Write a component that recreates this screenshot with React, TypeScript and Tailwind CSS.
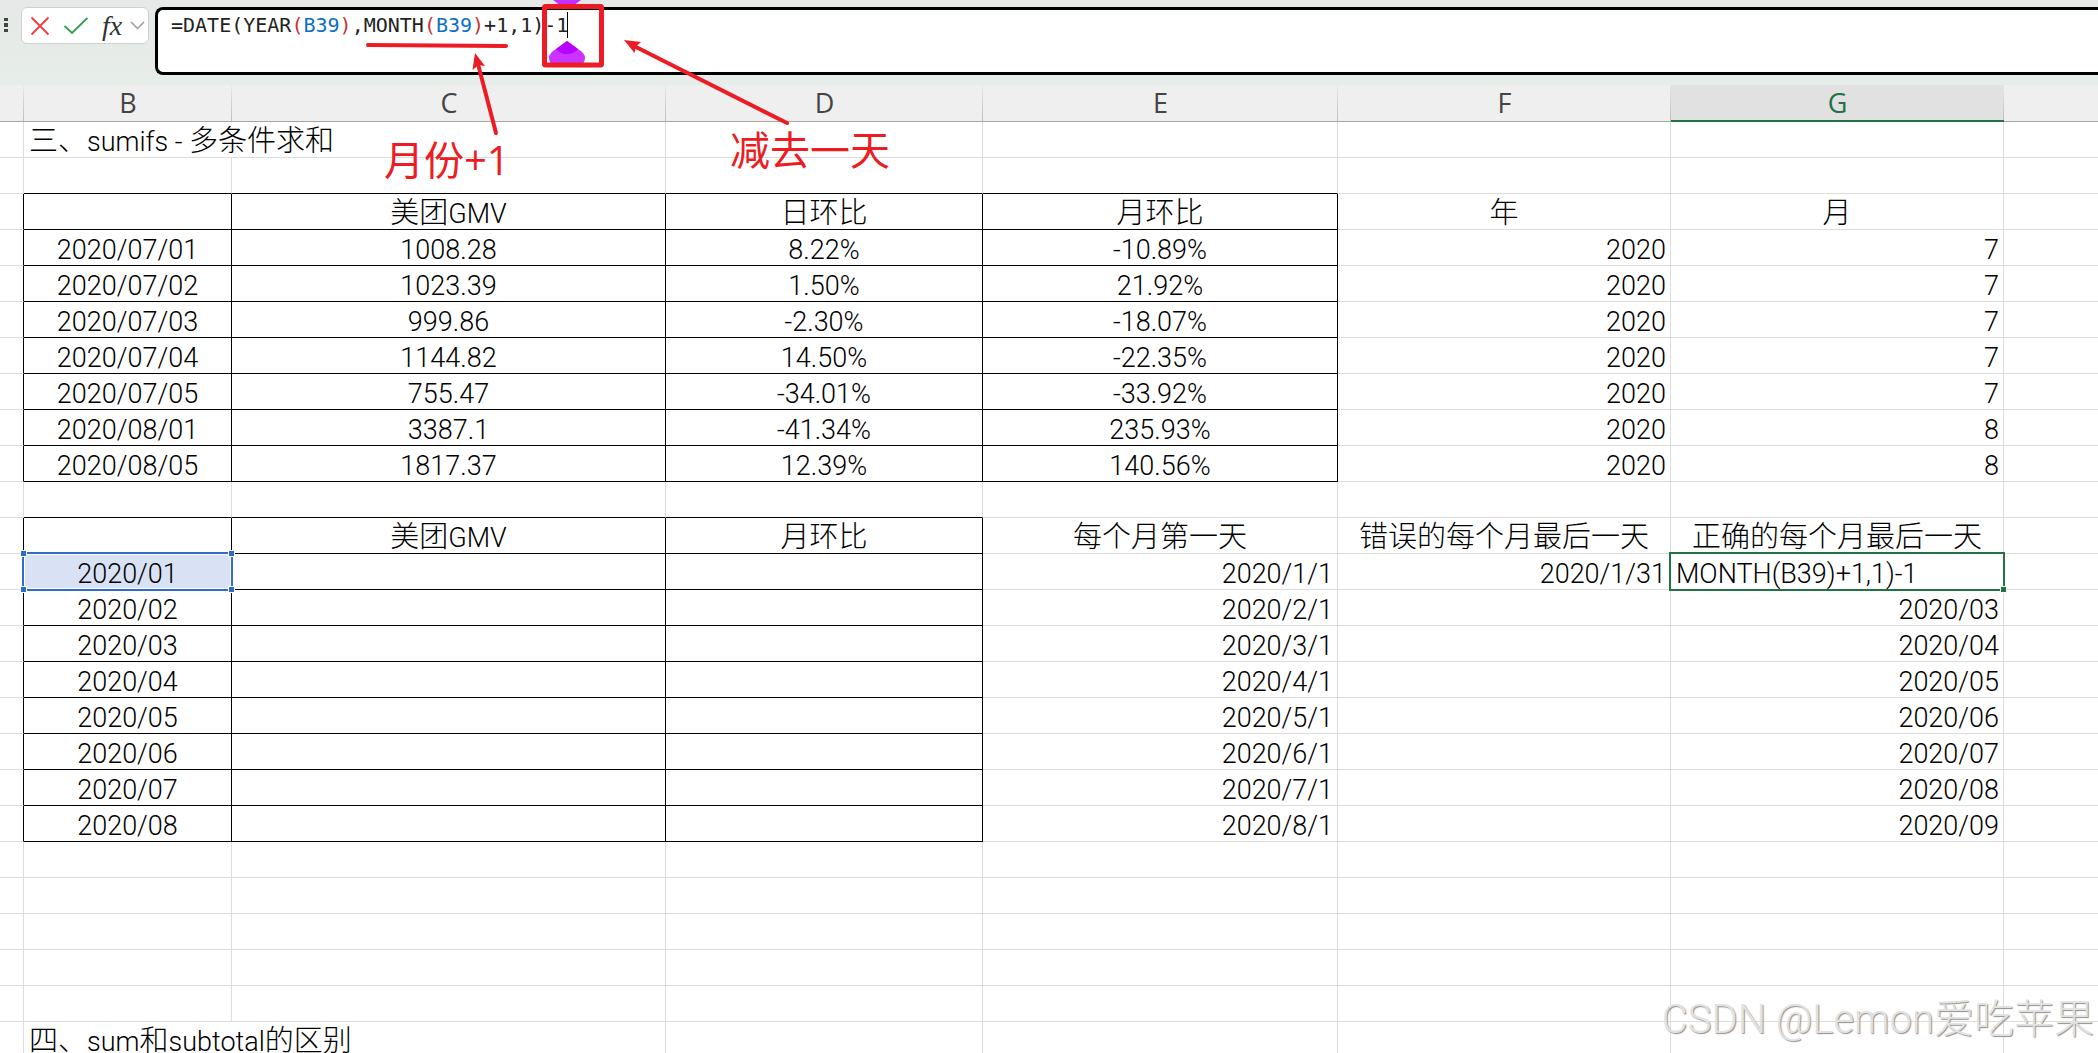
import { Fragment } from 'react';

type Align = 'left' | 'center' | 'right';

interface CellData {
  text?: string;
  align?: Align;
  boxed?: boolean;
  span?: number;
  mark?: 'reference' | 'active';
}

const columns = ['A', 'B', 'C', 'D', 'E', 'F', 'G', 'H'];

//Daily figures, one array per row: date, GMV, day ratio, month ratio, year, month
const daily = [
  ['2020/07/01', '1008.28', '8.22%', '-10.89%', '2020', '7'],
  ['2020/07/02', '1023.39', '1.50%', '21.92%', '2020', '7'],
  ['2020/07/03', '999.86', '-2.30%', '-18.07%', '2020', '7'],
  ['2020/07/04', '1144.82', '14.50%', '-22.35%', '2020', '7'],
  ['2020/07/05', '755.47', '-34.01%', '-33.92%', '2020', '7'],
  ['2020/08/01', '3387.1', '-41.34%', '235.93%', '2020', '8'],
  ['2020/08/05', '1817.37', '12.39%', '140.56%', '2020', '8'],
];

//Monthly figures: month, first day, wrong last day, correct last day
const monthly = [
  ['2020/01', '2020/1/1', '2020/1/31', 'MONTH(B39)+1,1)-1'],
  ['2020/02', '2020/2/1', '', '2020/03'],
  ['2020/03', '2020/3/1', '', '2020/04'],
  ['2020/04', '2020/4/1', '', '2020/05'],
  ['2020/05', '2020/5/1', '', '2020/06'],
  ['2020/06', '2020/6/1', '', '2020/07'],
  ['2020/07', '2020/7/1', '', '2020/08'],
  ['2020/08', '2020/8/1', '', '2020/09'],
];

const box = (text = ''): CellData => ({ text, align: 'center', boxed: true });
const mid = (text: string): CellData => ({ text, align: 'center' });
const num = (text: string): CellData => ({ text, align: 'right' });
const blankRow = (): CellData[] => columns.map(() => ({}));
const titleRow = (text: string): CellData[] => [{}, { text, align: 'left', span: 2 }, {}, {}, {}, {}, {}];

const rows: CellData[][] = [
  titleRow('三、sumifs - 多条件求和'),
  blankRow(),
  [{}, box(), box('美团GMV'), box('日环比'), box('月环比'), mid('年'), mid('月'), {}],
  ...daily.map((d) => [{}, box(d[0]), box(d[1]), box(d[2]), box(d[3]), num(d[4]), num(d[5]), {}]),
  blankRow(),
  [{}, box(), box('美团GMV'), box('月环比'), mid('每个月第一天'), mid('错误的每个月最后一天'), mid('正确的每个月最后一天'), {}],
  ...monthly.map((m, i): CellData[] => [
    {},
    { ...box(m[0]), mark: i === 0 ? 'reference' : undefined },
    box(),
    box(),
    num(m[1]),
    num(m[2]),
    i === 0 ? { text: m[3], align: 'left', mark: 'active' } : num(m[3]),
    {},
  ]),
  blankRow(),
  blankRow(),
  blankRow(),
  blankRow(),
  blankRow(),
  titleRow('四、sum和subtotal的区别'),
];

const alignClass = {
  left: 'text-left pl-[5px]',
  center: 'text-center',
  right: 'text-right pr-1',
};

//Latin runs are set a little smaller than the Chinese ones
function CellText({ text }: { text: string }) {
  const parts = text.split(/([\x20-\x7e]+)/).filter(Boolean);
  return (
    <span className="relative z-20 whitespace-pre">
      {parts.map((part, i) =>
        /^[\x20-\x7e]/.test(part) ? (
          <span key={i} className="text-[27px]">{part}</span>
        ) : (
          <Fragment key={i}>{part}</Fragment>
        )
      )}
    </span>
  );
}

function Cell({ cell, next, below }: { cell: CellData; next?: CellData; below?: CellData }) {
  const right = cell.boxed || next?.boxed ? 'border-r-black' : 'border-r-[#dcdcdc]';
  const bottom = cell.boxed || below?.boxed ? 'border-b-black' : 'border-b-[#dcdcdc]';

  return (
    <td
      colSpan={cell.span}
      className={`relative h-9 border-r border-b px-0 pt-[3px] pb-0 leading-[30px] last:border-r-0 ${right} ${bottom} ${alignClass[cell.align ?? 'left']}`}
    >
      {cell.mark === 'reference' && (
        <div className="absolute -inset-[2px] z-10 border-2 border-[#2f6bc9] bg-[#d9e1f4] shadow-[inset_0_0_0_1px_white]">
          <span className="absolute -top-[3px] -left-[3px] size-[5px] bg-[#2f6bc9] ring-1 ring-white" />
          <span className="absolute -top-[3px] -right-[3px] size-[5px] bg-[#2f6bc9] ring-1 ring-white" />
          <span className="absolute -bottom-[3px] -left-[3px] size-[5px] bg-[#2f6bc9] ring-1 ring-white" />
          <span className="absolute -right-[3px] -bottom-[3px] size-[5px] bg-[#2f6bc9] ring-1 ring-white" />
        </div>
      )}
      {cell.mark === 'active' && (
        <div className="absolute -inset-[2px] z-10 border-2 border-[#217346]">
          <span className="absolute -right-[3px] -bottom-[3px] size-[5px] bg-[#217346] ring-1 ring-white" />
        </div>
      )}
      {cell.text && <CellText text={cell.text} />}
    </td>
  );
}

function FormulaBar() {
  return (
    <div className="flex h-[85px] items-start bg-linear-to-b from-[#e6e9e7] to-[#e7ede8] pt-[7px]">
      <svg className="mt-[10px] h-4 w-[21px]" viewBox="0 0 21 16" fill="#444">
        <rect x="4" y="1" width="4" height="3" />
        <rect x="4" y="6" width="4" height="4" />
        <rect x="4" y="12" width="4" height="3" />
      </svg>

      <div className="flex h-[37px] w-32 items-center rounded-md border border-[#d0d0d0] bg-white">
        <button aria-label="Cancel" className="flex w-9 justify-center">
          <svg width="20" height="20" viewBox="0 0 20 20" stroke="#f03a3e" strokeWidth="1.8" fill="none">
            <path d="M1.5 1.5 L18.5 18.5 M18.5 1.5 L1.5 18.5" />
          </svg>
        </button>
        <button aria-label="Enter" className="flex w-9 justify-center">
          <svg width="24" height="18" viewBox="0 0 24 18" stroke="#2f9e4f" strokeWidth="1.8" fill="none">
            <path d="M0.5 9 L8 16 L23.5 1" />
          </svg>
        </button>
        <button
          aria-label="Insert function"
          className="flex-1 text-center font-['Liberation_Serif',serif] text-[28px] leading-8 text-[#333] italic"
        >
          fx
        </button>
        <button aria-label="Recent functions" className="flex w-[18px] justify-start">
          <svg width="15" height="9" viewBox="0 0 15 9" stroke="#999" strokeWidth="1.5" fill="none">
            <path d="M1 1 L7.5 7.5 L14 1" />
          </svg>
        </button>
      </div>

      <div
        role="textbox"
        aria-label="Formula"
        contentEditable
        suppressContentEditableWarning
        className="ml-1.5 h-[68px] flex-1 rounded-l-lg border-[3px] border-r-0 border-black bg-white pt-[3px] pl-[13px] font-['DejaVu_Sans_Mono',monospace] text-[20px] leading-6 whitespace-pre text-[#222] outline-none"
      >
        =DATE(YEAR<span className="text-[#c8322f]">(</span>
        <span className="text-[#0a6fc8]">B39</span>
        <span className="text-[#c8322f]">)</span>,MONTH<span className="text-[#c8322f]">(</span>
        <span className="text-[#0a6fc8]">B39</span>
        <span className="text-[#c8322f]">)</span>+1,1)-1
      </div>
    </div>
  );
}

function Sheet() {
  return (
    <table className="w-full table-fixed border-separate border-spacing-0 bg-white font-['Roboto','Noto_Sans_CJK_SC',sans-serif] text-[29px] font-light text-black">
      <colgroup>
        <col className="w-6" />
        <col className="w-[208px]" />
        <col className="w-[434px]" />
        <col className="w-[317px]" />
        <col className="w-[355px]" />
        <col className="w-[333px]" />
        <col className="w-[333px]" />
        <col />
      </colgroup>
      <thead>
        <tr className="font-['Open_Sans',sans-serif] text-[27px]">
          {columns.map((name) => (
            <th
              key={name}
              scope="col"
              className={`h-[37px] bg-[linear-gradient(#e8e8e8,#bdbdbd)] bg-[length:1px_100%] bg-right bg-no-repeat p-0 leading-[34px] font-normal last:bg-none ${
                name === 'G'
                  ? 'border-b-2 border-b-[#217346] bg-[#e1e1e1] text-[#217346]'
                  : 'border-b border-b-[#a6a6a6] bg-[#efefef] text-[#444]'
              }`}
            >
              {name !== 'A' && name !== 'H' && name}
            </th>
          ))}
        </tr>
      </thead>
      <tbody>
        {rows.map((row, r) => (
          <tr key={r}>
            {row.map((cell, c) => (
              <Cell key={c} cell={cell} next={row[c + 1]} below={row[1]?.span ? undefined : rows[r + 1]?.[c]} />
            ))}
          </tr>
        ))}
      </tbody>
    </table>
  );
}

//Red notes and the purple caret grips drawn over the sheet
function Annotations() {
  return (
    <div className="pointer-events-none absolute top-0 left-0 z-30 font-['Open_Sans','Noto_Sans_CJK_SC',sans-serif] text-[40px] leading-[40px] text-[#ed1c24]">
      <svg width="820" height="150" viewBox="0 0 820 150" fill="none">
        <path d="M553 0 H581 Q574 6 567 9 Q560 6 553 0 Z" fill="#c22fff" />
        <path d="M567 41 L578 49 Q585 53 585 58 Q585 63 580 66 H554 Q549 63 549 58 Q549 53 556 49 Z" fill="#cb33ff" />
        <path d="M567 41 L578 49 Q574 54 567 54 Q560 54 556 49 Z" fill="#b700ff" />
        <path d="M567.5 12 V38" stroke="#000" />
        <rect x="544.5" y="6.5" width="57" height="58.5" rx="1" stroke="#ed1c24" strokeWidth="5" />
        <g stroke="#ed1c24" strokeWidth="4" strokeLinecap="round">
          <path d="M368 45 L506 46" />
          <path d="M496 133 L478 64" />
          <path d="M787 123 L636 47" />
        </g>
        <path d="M475 53 L485 66 L478.500 65 L472.500 70 Z" fill="#ed1c24" />
        <path d="M624 40 L641 42 L636 46.500 L634.500 53 Z" fill="#ed1c24" />
      </svg>
      <p className="absolute top-[140px] left-[384px] whitespace-nowrap">月份+1</p>
      <p className="absolute top-[130px] left-[730px] whitespace-nowrap">减去一天</p>
    </div>
  );
}

export default function App() {
  return (
    <div className="relative h-screen overflow-hidden bg-white">
      <FormulaBar />
      <Sheet />
      <Annotations />

      <p className="absolute right-1 bottom-[9px] z-30 font-['Roboto','Noto_Sans_CJK_SC',sans-serif] text-[40px] leading-[48px] font-light text-[#e2e2e2] [text-shadow:1px_1px_1px_#8f8f8f]">
        CSDN @Lemon爱吃苹果
      </p>
    </div>
  );
}
